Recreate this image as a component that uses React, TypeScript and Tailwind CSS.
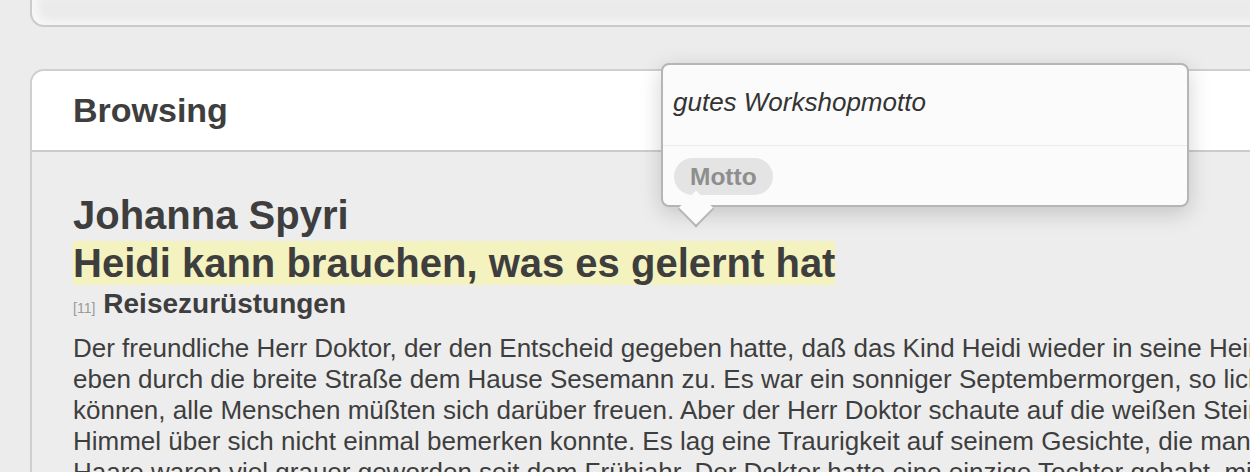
import React from "react";

const lines = [
  "Der freundliche Herr Doktor, der den Entscheid gegeben hatte, daß das Kind Heidi wieder in seine Heimat zurückkehren solle, ging",
  "eben durch die breite Straße dem Hause Sesemann zu. Es war ein sonniger Septembermorgen, so lichtvoll und lieblich, daß man hätte",
  "können, alle Menschen müßten sich darüber freuen. Aber der Herr Doktor schaute auf die weißen Steine zu seinen Füßen nieder und",
  "Himmel über sich nicht einmal bemerken konnte. Es lag eine Traurigkeit auf seinem Gesichte, die man früher nie an ihm gesehen",
  "Haare waren viel grauer geworden seit dem Frühjahr. Der Doktor hatte eine einzige Tochter gehabt, mit der er seit dem Tode",
];

export default function App() {
  return (
    <div
      className="relative h-[472px] w-full overflow-hidden bg-[#ececec] text-[#3e3e3e]"
      style={{ fontFamily: '"Liberation Sans", Arial, Helvetica, sans-serif' }}
    >
      {/* top panel (cut off) */}
      <div className="ml-[30px] h-[27px] w-[1400px] rounded-bl-[14px] border-b-2 border-l-2 border-[#cbcbcb] bg-[#ebebeb] shadow-[inset_6px_-4px_8px_rgba(255,255,255,0.6)]" />

      {/* main panel */}
      <div className="ml-[30px] mt-[42px] w-[1500px] rounded-tl-[14px] border-l-2 border-t-2 border-[#cfcfcf] bg-[#ededed]">
        <div className="rounded-tl-[12px] border-b-2 border-[#cccccc] bg-white pb-[20px] pl-[41px] pt-[19px]">
          <h2 className="text-[34px] font-bold leading-[40px]">Browsing</h2>
        </div>
        <div className="pl-[41px] pt-[39px]">
          <div className="text-[40px] font-bold leading-[48px]">Johanna Spyri</div>
          <div className="text-[40px] font-bold leading-[48px]">
            <span className="bg-[#f4f2bf]">Heidi kann brauchen, was es gelernt hat</span>
          </div>
          <div className="flex items-baseline gap-[8px] leading-[34px]">
            <span className="text-[14px] text-[#9a9a9a]">[11]</span>
            <span className="text-[28px] font-bold">Reisezurüstungen</span>
          </div>
          <div className="mt-[8px] text-[26px] leading-[31px]">
            {lines.map((l) => (
              <div key={l} className="whitespace-nowrap">
                {l}
              </div>
            ))}
          </div>
        </div>
      </div>

      {/* popover */}
      <div className="absolute left-[661px] top-[63px] w-[528px] rounded-[8px] border-2 border-[#b5b5b5] bg-[#fbfbfb] shadow-[0_6px_22px_rgba(0,0,0,0.18)]">
        <div className="pb-[28px] pl-[10px] pt-[22px] text-[26px] italic leading-[30px] text-[#333333]">
          gutes Workshopmotto
        </div>
        <div className="border-t border-[#ebebeb] pb-[10px] pl-[11px] pt-[12px]">
          <span className="inline-flex h-[37px] items-center rounded-full bg-[#e4e4e4] px-[16px] text-[24.5px] font-bold leading-[37px] text-[#8e8e8e]">
            Motto
          </span>
        </div>
        <div className="absolute left-[20px] top-[131px] h-[26px] w-[26px] rotate-45 border-b-2 border-r-2 border-[#b5b5b5] bg-[#fbfbfb]" />
      </div>
    </div>
  );
}
